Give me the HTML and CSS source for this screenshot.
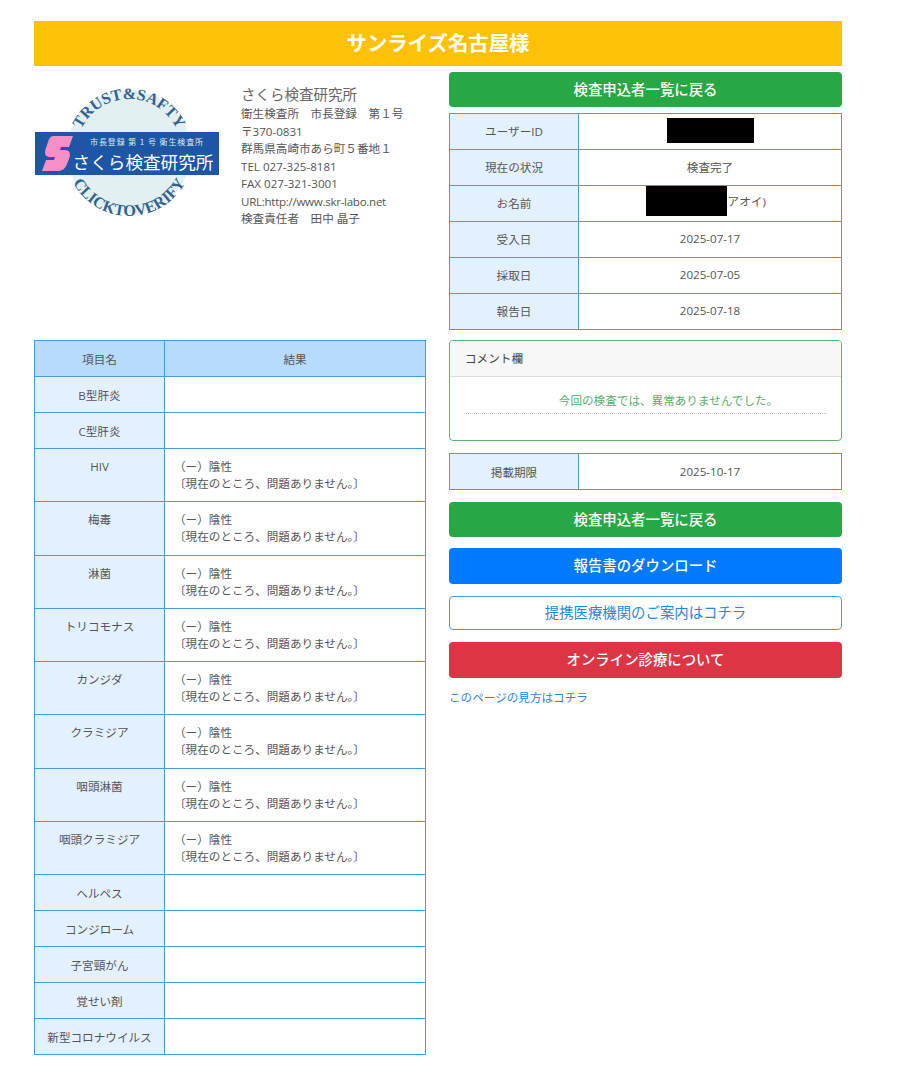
FILE: index.html
```html
<!DOCTYPE html>
<html lang="ja">
<head>
    <meta charset="UTF-8">
    <title>検査結果</title>
    <link rel="stylesheet" href="styles.css">
</head>
<body>
    <div class="page">
        <h1 class="banner">サンライズ名古屋様</h1>
        <div class="columns">
            <div class="col-left">
                <div class="lab">
                    <!-- ロゴ -->
                    <svg class="logo" viewBox="0 0 186 136" width="186" height="136">
                        <defs>
                            <path id="arcTop" d="M42 67 A53 53 0 0 1 148 67"/>
                            <path id="arcBottom" d="M31 67 A64 64 0 0 0 159 67"/>
                        </defs>
                        <circle cx="95" cy="67" r="62" fill="#e3f0f2"/>
                        <text class="logo-ring"><textPath href="#arcTop" startOffset="50%" text-anchor="middle">TRUST&amp;SAFTY</textPath></text>
                        <text class="logo-ring"><textPath href="#arcBottom" startOffset="50%" text-anchor="middle">CLICKTOVERIFY</textPath></text>
                        <rect x="1" y="47" width="184" height="43" fill="#1c56a4"/>
                        <path d="M19 51 H39 L35 62 H27 L26 65 H31 C36 65 37 69 35 74 L33 79 C31 84 28 86 24 86 H8 L12 75 H20 L21 72 H16 C11 72 10 68 12 63 L14 57 C15 53 17 51 19 51 Z" fill="#f58fc5"/>
                        <text class="logo-small" x="113" y="60" text-anchor="middle">市長登録 第 1 号 衛生検査所</text>
                        <text class="logo-name" x="109" y="84" text-anchor="middle">さくら検査研究所</text>
                    </svg>
                    <div class="lab-info">
                        <div class="lab-name">さくら検査研究所</div>
                        <div>衛生検査所　市長登録　第１号</div>
                        <div>〒370-0831</div>
                        <div>群馬県高崎市あら町５番地１</div>
                        <div>TEL 027-325-8181</div>
                        <div>FAX 027-321-3001</div>
                        <div class="lab-url">URL:http://www.skr-labo.net</div>
                        <div>検査責任者　田中 晶子</div>
                    </div>
                </div>

                <table class="grid results">
                    <tr><th class="head">項目名</th><th class="head">結果</th></tr>
                    <tr><th>B型肝炎</th><td></td></tr>
                    <tr><th>C型肝炎</th><td></td></tr>
                    <tr class="two"><th>HIV</th><td>（ー）陰性<br>〔現在のところ、問題ありません。〕</td></tr>
                    <tr class="two"><th>梅毒</th><td>（ー）陰性<br>〔現在のところ、問題ありません。〕</td></tr>
                    <tr class="two"><th>淋菌</th><td>（ー）陰性<br>〔現在のところ、問題ありません。〕</td></tr>
                    <tr class="two"><th>トリコモナス</th><td>（ー）陰性<br>〔現在のところ、問題ありません。〕</td></tr>
                    <tr class="two"><th>カンジダ</th><td>（ー）陰性<br>〔現在のところ、問題ありません。〕</td></tr>
                    <tr class="two"><th>クラミジア</th><td>（ー）陰性<br>〔現在のところ、問題ありません。〕</td></tr>
                    <tr class="two"><th>咽頭淋菌</th><td>（ー）陰性<br>〔現在のところ、問題ありません。〕</td></tr>
                    <tr class="two"><th>咽頭クラミジア</th><td>（ー）陰性<br>〔現在のところ、問題ありません。〕</td></tr>
                    <tr><th>ヘルペス</th><td></td></tr>
                    <tr><th>コンジローム</th><td></td></tr>
                    <tr><th>子宮頸がん</th><td></td></tr>
                    <tr><th>覚せい剤</th><td></td></tr>
                    <tr><th>新型コロナウイルス</th><td></td></tr>
                </table>
            </div>

            <div class="col-right">
                <a class="btn btn-green btn-top">検査申込者一覧に戻る</a>

                <table class="grid info status">
                    <tr><th>ユーザーID</th><td><span class="mask mask-id"></span></td></tr>
                    <tr><th>現在の状況</th><td>検査完了</td></tr>
                    <tr><th>お名前</th><td><span class="name-cell"><span class="mask mask-name"></span><span class="kana">(アオイ)</span></span></td></tr>
                    <tr><th>受入日</th><td>2025-07-17</td></tr>
                    <tr><th>採取日</th><td>2025-07-05</td></tr>
                    <tr><th>報告日</th><td>2025-07-18</td></tr>
                </table>

                <div class="comment">
                    <div class="comment-head">コメント欄</div>
                    <div class="comment-body">
                        <p>今回の検査では、異常ありませんでした。</p>
                    </div>
                </div>

                <table class="grid info limit">
                    <tr><th>掲載期限</th><td>2025-10-17</td></tr>
                </table>

                <a class="btn btn-green">検査申込者一覧に戻る</a>
                <a class="btn btn-blue">報告書のダウンロード</a>
                <a class="btn btn-outline">提携医療機関のご案内はコチラ</a>
                <a class="btn btn-red">オンライン診療について</a>
                <a class="howto">このページの見方はコチラ</a>
            </div>
        </div>
    </div>
</body>
</html>
```

FILE: styles.css
```css
* {
    box-sizing: border-box;
}

body {
    margin: 0;
    background-color: #fff;
    color: #555;
    font-family: 'Open Sans', 'Noto Sans CJK JP', sans-serif;
    font-size: 11.6px;
}

.page {
    width: 808px;
    margin-left: 34px;
    padding: 21px 0 37px;
}

.banner {
    margin: 0;
    height: 45px;
    line-height: 45px;
    background-color: #ffc107;
    color: #fff;
    font-size: 20.4px;
    font-weight: 700;
    text-align: center;
}

.columns {
    display: grid;
    grid-template-columns: 392px 393px;
    column-gap: 23px;
    margin-top: 6px;
}

/* 検査所情報 */
.lab {
    display: flex;
    height: 268px;
    padding-top: 13px;
}

.logo {
    flex: none;
}

.logo-ring {
    fill: #33628f;
    font-family: 'Liberation Serif', serif;
    font-size: 16px;
    font-weight: 700;
}

.logo-small {
    fill: #dfe8f4;
    font-family: 'Noto Sans CJK JP', sans-serif;
    font-size: 8px;
    letter-spacing: 0.9px;
}

.logo-name {
    fill: #fff;
    font-family: 'Noto Sans CJK JP', sans-serif;
    font-size: 17.6px;
}

.lab-info {
    margin-left: 21px;
    line-height: 17.5px;
    color: #555;
}

.lab-name {
    font-size: 14.5px;
    line-height: 20px;
    color: #666;
}

.lab-url {
    letter-spacing: -0.3px;
}

/* テーブル */
.grid {
    width: 100%;
    border-collapse: collapse;
    table-layout: fixed;
}

.grid th,
.grid td {
    border: 1px solid #4a9be0;
    height: 36px;
    font-weight: 400;
    text-align: center;
    vertical-align: middle;
    padding: 0 8px;
}

.grid th {
    background-color: #e3f1ff;
}

.grid th.head {
    background-color: #b8daff;
}

.results th:first-child {
    width: 130px;
    padding: 0;
}

.results .two th,
.results .two td {
    height: 53.3px;
    vertical-align: top;
    padding-top: 9px;
    line-height: 17px;
}

.results .two td {
    text-align: left;
    padding-left: 9px;
}

.info th {
    width: 129px;
}

.status th,
.status td {
    padding-bottom: 2px;
}

.mask {
    display: inline-block;
    background-color: #000;
}

.mask-id {
    width: 87px;
    height: 25px;
    vertical-align: middle;
}

.name-cell {
    display: inline-flex;
    align-items: center;
    margin-right: 8px;
}

.mask-name {
    position: relative;
    z-index: 1;
    width: 81px;
    height: 30px;
}

.kana {
    margin-left: -3px;
}

/* コメント欄 */
.comment {
    height: 101px;
    margin-top: 10px;
    border: 1px solid #5cb270;
    border-radius: 4px;
    overflow: hidden;
}

.comment-head {
    height: 36px;
    line-height: 36px;
    padding-left: 15px;
    background-color: #f7f7f7;
    border-bottom: 1px solid #ddd;
    color: #444;
}

.comment-body {
    padding: 15px 14px 0;
}

.comment-body p {
    margin: 0;
    height: 22px;
    line-height: 18px;
    border-bottom: 1px dotted #bbb;
    color: #5cac6c;
    text-align: center;
    padding-left: 46px;
}

.limit {
    margin-top: 12px;
}

/* ボタン */
.btn {
    display: block;
    height: 36px;
    line-height: 36px;
    margin-top: 12px;
    border-radius: 4px;
    color: #fff;
    font-size: 14.4px;
    font-weight: 500;
    text-align: center;
}

.btn-top {
    margin-top: 0;
    margin-bottom: 6px;
}

.btn-green {
    height: 35px;
    line-height: 35px;
    background-color: #28a745;
}

.btn-blue {
    margin-top: 11px;
    background-color: #007bff;
}

.btn-outline {
    height: 34px;
    line-height: 32px;
    border: 1px solid #4a9be0;
    background-color: #fff;
    color: #2b84e0;
    font-weight: 400;
}

.btn-red {
    background-color: #dc3545;
}

.howto {
    display: block;
    margin-top: 11px;
    line-height: 18px;
    color: #2b84e0;
}
```
